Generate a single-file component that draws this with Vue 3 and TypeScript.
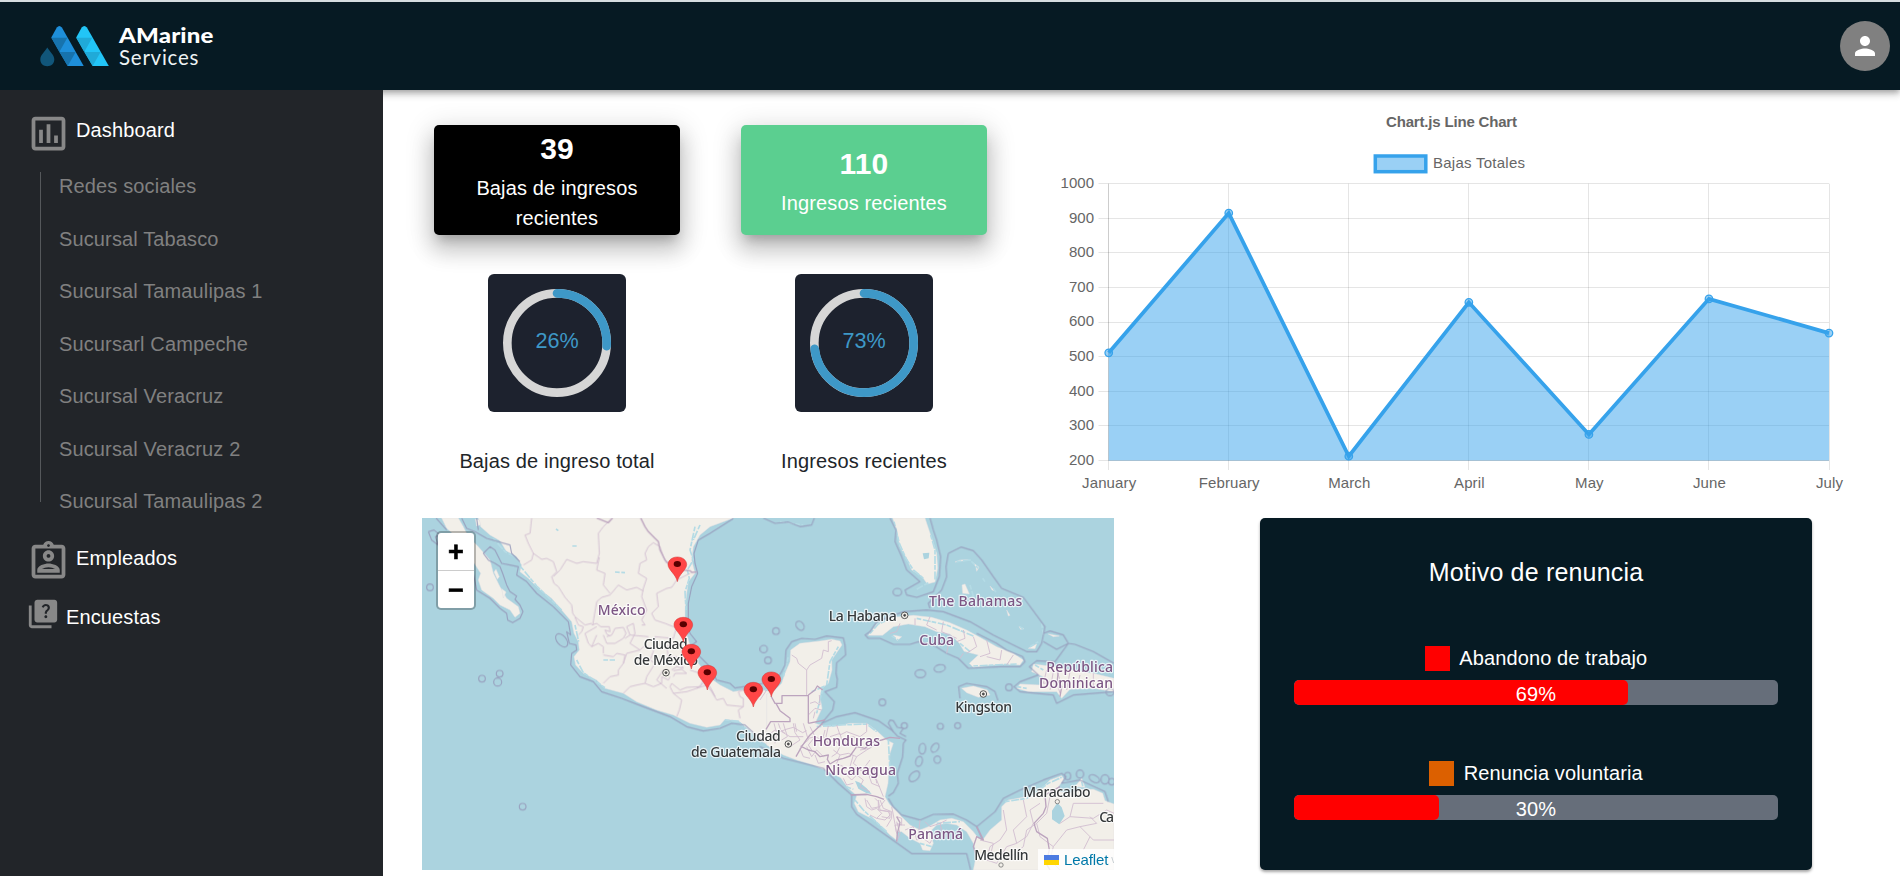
<script setup lang="ts">
interface Label { text: string; x: number; y: number; w: number; kind: 'country' | 'city' }

const branches: string[] = [
  'Redes sociales', 'Sucursal Tabasco', 'Sucursal Tamaulipas 1', 'Sucursarl Campeche',
  'Sucursal Veracruz', 'Sucursal Veracruz 2', 'Sucursal Tamaulipas 2',
]

const cards = [
  { value: 39, label: 'Bajas de ingresos recientes', tone: 'dark' },
  { value: 110, label: 'Ingresos recientes', tone: 'green' },
]

const gauges = [
  { value: 26, label: 'Bajas de ingreso total' },
  { value: 73, label: 'Ingresos recientes' },
]

const reasons = [
  { name: 'Abandono de trabajo', value: 69, tone: 'red' },
  { name: 'Renuncia voluntaria', value: 30, tone: 'orange' },
]

// Line chart geometry
const left = 68.7
const step = 120.05
const top = 93.7
const bottom = 370.4
const months = ['January', 'February', 'March', 'April', 'May', 'June', 'July']
const totals = [511, 915, 212, 657, 275, 667, 568]
const ticks = [1000, 900, 800, 700, 600, 500, 400, 300, 200]
const px = (i: number): number => left + i * step
const py = (v: number): number => bottom - ((v - 200) / 800) * (bottom - top)
const snap = (n: number): number => Math.floor(n) + 0.5
const line = totals.map((v, i) => `${px(i)},${py(v)}`).join(' ')
const area = `${px(0)},${bottom} ${line} ${px(6)},${bottom}`

// Gauge ring
const ring = 2 * Math.PI * 46
const dash = (v: number): string => `${(ring * v) / 100} ${ring}`

const pins: [number, number][] = [[802, 215], [820, 396], [844, 477], [892, 540], [1084, 560], [1030, 591]]

const labels: Label[] = [
  { text: 'México', x: 635, y: 315, w: 144, kind: 'country' },
  { text: 'Ciudad', x: 767, y: 416, w: 132, kind: 'city' },
  { text: 'de México', x: 768, y: 465, w: 193, kind: 'city' },
  { text: 'Ciudad', x: 1045, y: 692, w: 134, kind: 'city' },
  { text: 'de Guatemala', x: 978, y: 742, w: 270, kind: 'city' },
  { text: 'The Bahamas', x: 1697, y: 288, w: 280, kind: 'country' },
  { text: 'La Habana', x: 1358, y: 333, w: 204, kind: 'city' },
  { text: 'Cuba', x: 1580, y: 406, w: 104, kind: 'country' },
  { text: 'Kingston', x: 1721, y: 607, w: 170, kind: 'city' },
  { text: 'República', x: 2009, y: 485, w: 200, kind: 'country' },
  { text: 'Dominican', x: 1998, y: 535, w: 222, kind: 'country' },
  { text: 'Honduras', x: 1309, y: 708, w: 202, kind: 'country' },
  { text: 'Nicaragua', x: 1352, y: 794, w: 212, kind: 'country' },
  { text: 'Panamá', x: 1577, y: 988, w: 164, kind: 'country' },
  { text: 'Maracaibo', x: 1941, y: 861, w: 202, kind: 'city' },
  { text: 'Medellín', x: 1774, y: 1050, w: 163, kind: 'city' },
  { text: 'Ca', x: 2090, y: 936, w: 44, kind: 'city' },
]

const capitals: [number, number][] = [[768, 488], [1135, 702], [1484, 316], [1720, 552]]
const towns: [number, number][] = [[1942, 875], [1773, 1065]]

// Small islands: centre x, centre y, radius x, radius y, tilt
const islets: number[][] = [
  [60, 232, 10, 10, 0], [216, 506, 10, 10, 0], [269, 491, 10, 10, 0], [263, 516, 12, 12, 0],
  [338, 890, 10, 10, 0], [455, 391, 14, 23, -40], [1061, 417, 11, 11, 0], [1074, 451, 10, 10, 0],
  [1098, 363, 10, 10, 0], [1170, 347, 11, 15, -35], [1462, 246, 13, 11, 0], [1417, 577, 10, 10, 0],
  [1531, 491, 16, 12, 0], [1589, 475, 17, 11, -12], [1591, 649, 9, 9, 0], [1643, 647, 9, 9, 0],
  [1483, 647, 9, 9, 0], [1537, 716, 10, 16, 5], [1575, 713, 10, 15, 35], [1527, 754, 10, 15, 15],
  [1582, 749, 10, 11, 0], [1513, 799, 12, 19, 45], [1797, 532, 10, 10, 0], [1973, 798, 9, 11, 0],
  [2010, 792, 11, 12, 0], [2053, 806, 17, 10, 30], [2085, 808, 12, 14, 0], [2105, 815, 9, 10, 0], [2100, 546, 12, 11, 0],
]
</script>

<template>
  <div class="app">
    <header class="topbar">
      <svg class="logo" width="190" height="60" viewBox="0 0 190 60">
        <g>
          <path d="M17.3 32.5c-2.500 4.200-7 7.500-7 12 0 4.200 3.100 6.700 7 6.700s7-2.500 7-6.700c0-4.500-4.500-7.800-7-12z" fill="#11567a" />
          <path d="M21.300 22.500 26.800 12.600Q29.300 9.400 31.900 12.600L53.700 51H37.700z" fill="#1e8fda" />
          <path d="M21.300 22.800h16l-8 14.200zM29.300 37h16.400l-8 14z" fill="#1773ad" />
          <path d="M46.200 22.500 51.700 12.600Q54.300 9.400 56.900 12.600L78.800 51H62.700z" fill="#22c5f7" />
          <path d="M46.200 22.800h16l-8 14.200zM54.200 37h16.400l-8 14z" fill="#20aad8" />
        </g>
        <text x="89" y="27.600" class="brand" textLength="94.500" lengthAdjust="spacingAndGlyphs">AMarine</text>
        <text x="89" y="50.200" class="brand-sub" textLength="79.500">Services</text>
      </svg>
      <button class="avatar" aria-label="Perfil">
        <svg width="30" height="30" viewBox="0 0 24 24"><path fill="#fff" d="M12 12c2.210 0 4-1.790 4-4s-1.790-4-4-4-4 1.790-4 4 1.790 4 4 4zm0 2c-2.670 0-8 1.340-8 4v2h16v-2c0-2.660-5.330-4-8-4z" /></svg>
      </button>
    </header>

    <div class="body">
      <aside class="sidebar">
        <div class="nav-item first">
          <svg width="45" height="45" viewBox="0 0 24 24"><path d="M9 17H7v-7h2v7zm4 0h-2V7h2v10zm4 0h-2v-4h2v4zm2 2H5V5h14v14zm0-16H5c-1.100 0-2 .9-2 2v14c0 1.100.9 2 2 2h14c1.100 0 2-.9 2-2V5c0-1.100-.9-2-2-2z" fill-rule="evenodd" /></svg>
          <span>Dashboard</span>
        </div>
        <ul class="branches">
          <li v-for="b in branches" :key="b">{{ b }}</li>
        </ul>
        <div class="nav-item second">
          <svg width="45" height="45" viewBox="0 0 24 24"><path fill-rule="evenodd" d="M12 12c1.650 0 3-1.350 3-3s-1.350-3-3-3-3 1.350-3 3 1.350 3 3 3zm0-4c.55 0 1 .45 1 1s-.45 1-1 1-1-.45-1-1 .45-1 1-1zm6 8.580c0-2.500-3.970-3.580-6-3.580s-6 1.080-6 3.580V18h12v-1.420zM8.480 16c.74-.51 2.230-1 3.520-1s2.780.49 3.520 1H8.480zM19 3h-4.180C14.400 1.840 13.300 1 12 1c-1.300 0-2.400.84-2.820 2H5c-1.100 0-2 .9-2 2v14c0 1.100.9 2 2 2h14c1.100 0 2-.9 2-2V5c0-1.100-.9-2-2-2zm-7-.25c.41 0 .75.34.75.75s-.34.75-.75.75-.75-.34-.75-.75.34-.75.75-.75zM19 19H5V5h14v14z" /></svg>
          <span>Empleados</span>
        </div>
        <div class="nav-item third">
          <svg width="34" height="34" viewBox="0 0 24 24"><path fill-rule="evenodd" d="M4 6H2v14c0 1.100.9 2 2 2h14v-2H4V6zm16-4H8c-1.100 0-2 .9-2 2v12c0 1.100.9 2 2 2h12c1.100 0 2-.9 2-2V4c0-1.100-.9-2-2-2zm-5.990 13c-.59 0-1.050-.47-1.050-1.050 0-.59.47-1.040 1.050-1.040.59 0 1.040.45 1.040 1.040-.01.58-.45 1.050-1.040 1.050zm2.500-6.170c-.63.93-1.230 1.210-1.560 1.810-.13.24-.18.4-.18 1.180h-1.520c0-.41-.06-1.080.26-1.650.41-.73 1.180-1.160 1.630-1.800.48-.68.21-1.940-1.140-1.940-.88 0-1.320.67-1.500 1.230l-1.370-.57C11.510 5.960 12.520 5 13.990 5c1.230 0 2.080.56 2.510 1.260.37.61.58 1.730.01 2.570z" /></svg>
          <span>Encuestas</span>
        </div>
      </aside>

      <main class="main">
        <section class="upper">
          <div class="stats">
            <div v-for="c in cards" :key="c.value" class="card" :class="c.tone">
              <strong>{{ c.value }}</strong>
              <p>{{ c.label }}</p>
            </div>
            <figure v-for="g in gauges" :key="g.value" class="gauge">
              <div class="tile">
                <svg width="108" height="108" viewBox="0 0 100 100">
                  <circle cx="50" cy="50" r="46" class="trail" />
                  <circle cx="50" cy="50" r="46" class="arc" :stroke-dasharray="dash(g.value)" transform="rotate(-90 50 50)" />
                  <text x="50" y="54.800" class="percent">{{ g.value }}%</text>
                </svg>
              </div>
              <figcaption>{{ g.label }}</figcaption>
            </figure>
          </div>

          <svg class="chart" width="820" height="410" viewBox="0 0 820 410">
            <text x="411.500" y="36.500" class="chart-title" text-anchor="middle" textLength="131">Chart.js Line Chart</text>
            <rect x="335.300" y="66" width="50.500" height="15.700" class="legend-box" />
            <text x="393" y="78.300" textLength="92">Bajas Totales</text>
            <g class="grid">
              <line v-for="t in ticks" :key="t" x1="58.500" :x2="px(6)" :y1="snap(py(t))" :y2="snap(py(t))" />
              <line v-for="(m, i) in months" :key="m" :x1="snap(px(i))" :x2="snap(px(i))" :y1="top" y2="380" />
              <line :x1="snap(left)" :x2="snap(left)" :y1="top" :y2="bottom" />
              <line :x1="left" :x2="px(6)" :y1="snap(bottom)" :y2="snap(bottom)" />
            </g>
            <polygon :points="area" class="area" />
            <polyline :points="line" class="line" />
            <circle v-for="(v, i) in totals" :key="i" :cx="px(i)" :cy="py(v)" r="3.750" class="dot" />
            <text v-for="t in ticks" :key="t" x="54.300" :y="py(t) + 4.300" text-anchor="end" class="tick">{{ t }}</text>
            <text v-for="(m, i) in months" :key="m" :x="px(i) + 0.500" y="398" text-anchor="middle" class="tick">{{ m }}</text>
          </svg>
        </section>

        <section class="lower">
          <div class="map">
            <svg width="692" height="352" viewBox="36 24 2076 1056">
              <g class="land">
                <path d="M205 24 212 50 240 75 270 92 288 122 320 140 335 165 330 185 355 205 385 235 425 265 455 300 485 335 492 370 505 395 508 420 492 440 497 465 520 490 560 510 585 535 640 550 680 575 740 600 790 615 840 640 890 652 930 645 945 628 985 632 1010 655 1050 690 1090 715 1090 547 1060 540 1030 535 1000 540 970 545 930 525 895 500 865 460 845 420 832 380 825 340 825 300 830 250 835 215 855 190 845 150 850 110 870 75 900 50 970 24z" />
                <path d="M95 24H145L160 50 175 80 205 110 240 150 250 190 270 230 290 265 325 290 330 310 315 322 300 300 270 285 250 265 215 240 205 210 212 190 180 140 150 90 110 55z" />
                <path d="M196 28 208 30 212 44 200 48zM258 178 268 200 262 208 252 186zM275 236 288 246 280 264z" />
              </g>
              <g class="coast">
                <path d="M250 85 285 125 320 142M332 170 380 228 455 300M495 345 506 395M500 450 520 488 585 533M855 50 840 120 850 150 832 180 838 205 825 245 828 300M870 45 850 90M945 630 985 634 1040 685M1000 540 1075 540M615 186 645 188M487 108 500 108M438 57 445 62M580 450 615 450" />
              </g>
              <g transform="translate(1050 0)">
                <g class="land">
                  <path d="M20 552 45 540 65 520 75 490 90 455 92 420 120 400 180 393 215 388 240 393 246 405 232 425 215 450 216 480 205 520 185 535 180 560 186 595 165 640 190 648 220 650 270 640 320 640 350 662 380 690 400 700 390 730 386 780 384 820 375 860 388 882 412 905 425 920 450 945 480 960 510 948 540 930 575 925 610 935 640 965 655 985 668 990 690 960 725 930 725 890 745 870 800 860 850 830 870 810 905 797 912 808 895 830 900 845 930 850 960 838 1000 838 1028 850 1035 872 1062 882V1080H640L650 1030 640 1000 620 965 590 945 560 940 530 945 510 965 520 1000 510 1022 488 1020 480 1000 450 985 425 965 410 965 412 992 390 975 370 955 345 930 320 918 295 905 283 880 290 857 265 835 242 803 200 782 160 765 110 750 70 735 20 705z" />
                  <path d="M398 24H495L512 75 530 130 533 175 525 216 502 222 485 198 455 180 440 145 420 110 412 70z" />
                  <path d="M325 376 350 342 400 322 460 316 515 322 570 338 620 360 665 385 710 410 760 430 790 450 780 465 720 463 640 472 628 460 655 435 612 424 598 400 570 372 530 365 495 350 445 342 400 350 368 376z" />
                  <path d="M605 535 640 528 682 540 690 555 655 562 620 548zM400 375 425 380 412 392z" />
                  <path d="M820 462 870 468 930 480 1000 490 1062 505V545L1000 535 930 538 905 565 890 545 850 545 805 545 770 535 780 522 840 525 850 500 815 485z" />
                  <path d="M945 830 965 805 975 832zM606 225 615 222 628 252 608 250z" />
                  <path d="M585 156 600 150 625 149 606 153zM640 158 657 172 650 184 648 172zM690 228 704 242 696 240zM777 350 792 356 782 358zM805 415 830 402 825 416zM865 372 898 378 880 380zM740 300 750 316 745 318z" />
                </g>
                <path class="lake" d="M892 878 905 892 914 918 898 943 876 928 876 902zM488 130 508 128 506 145 492 148zM285 812 300 818 320 835 335 852 320 850 295 836z" />
                <g class="coast">
                  <path d="M402 35 418 100 438 145 460 180 490 205M505 218 470 238M512 75 525 120 525 210M330 370 355 342 395 325M395 378 415 390M470 325 560 345 640 378M600 400 630 425M640 468 770 462M70 500 85 440M200 525 210 455 235 410M155 545 190 530 170 610M170 650 240 645 320 642 350 665M385 690 390 780M260 830 280 838M285 870 310 900 380 965M480 1000 515 1010M530 940 600 935M735 875 800 865 865 820 905 802M590 155 630 150 655 175M668 205 675 215M630 225 645 275M700 235 710 250M780 350 790 358M810 410 835 395M825 465 850 480M770 530 800 535M60 35 130 45M845 340 850 375M965 815 970 835" />
                </g>
              </g>
              <g class="limits">
                <path d="M55 65 72 60 90 75 76 80 85 105 65 90 55 65M190 190 200 240 240 265 270 295 290 310 293 330 308 338 330 325 339 305 330 285 315 268 320 258 300 245 290 225 278 190 270 170 255 160 235 150 220 130 240 110 255 120 275 160 300 165 325 170 320 195 350 215 380 250 430 290 475 335 482 375 470 365 478 400 498 405 500 420 485 430 482 465 510 500 550 515 575 545 635 565 700 590 780 620 830 650 880 663 930 655 965 640 1005 645 1060 695M970 26 900 70 865 90 852 130 855 160 863 190 845 230 835 280 835 340 840 370 860 395 845 405 870 440 900 470 920 510 960 520 975 534 1000 530 1060 520M200 24 205 60M155 24 170 55 195 65 230 85 300 105 305 130 330 155" />
                <path d="M78 24 110 60" />
                <g transform="translate(1050 0)">
                  <path d="M45 515 65 485 75 465 78 420 95 395 125 385 165 388 200 378 250 384 255 405 257 435 240 450 230 458 228 490 232 508 230 532 195 545 223 575 218 600 185 640 230 620 285 608 355 632 395 660 412 678 438 690 430 700 428 740 412 790 415 820 400 848 385 858M0 710 70 745 130 760 190 775 235 820 275 855 275 890 290 913 455 1031H620L632 1080M385 865 400 890 425 915 480 930 520 913 580 912 620 930 650 950 705 905 730 865 780 840 850 810 905 790 918 800 905 820 960 810 1035 845 1045 875M275 855 320 853M650 950 668 990" />
                  <path d="M390 24 408 60 405 95 425 140 440 180 480 215 435 240 440 255 470 262 520 245 538 200 542 140 530 90 520 60 510 24M565 130 603 111 640 122 665 150 700 200 725 235 790 262 855 350 845 400 830 425 800 425 700 375 630 335 550 305 500 300 430 305 350 335 330 365 315 375 325 385 360 385 400 403 450 403 475 395 520 405 560 430 595 445 625 475 720 470 780 470 795 455 788 440 740 420 710 400 650 370M510 295 505 280 545 240 560 200 558 170 565 130" />
                  <path d="M850 370 870 363 910 375 925 400 890 418 850 395M925 400 885 455 830 452 808 470 835 495 780 515 762 530 780 545 880 555 890 580 940 555 1062 545M925 400 945 403 1000 425 1062 460M600 565 596 530 620 520 680 530 705 545 714 572M10 24 45 40 85 36 120 50 155 45 163 24M400 665 385 640 390 630 400 632 412 652 430 655 420 670 438 680" />
                </g>
                <ellipse v-for="(e, i) in islets" :key="i" :cx="e[0]" :cy="e[1]" :rx="e[2]" :ry="e[3]" :transform="`rotate(${e[4]} ${e[0]} ${e[1]})`" />
              </g>
              <g class="states">
                <path d="M365 24 360 70 345 75 355 100 370 130 365 150 340 165M370 130 395 148 410 145 430 155 440 185 425 200 432 220 445 230 465 262 485 285 488 310 495 320 525 345 545 340M430 200 450 180 470 148 500 160 520 155 560 160 568 130 565 70 580 50 590 40 605 24M568 142 560 180 585 190 580 225 600 250M548 345 560 275 575 262 600 255M600 255 625 225 650 240 680 232 700 243M700 235 695 260 710 300 695 330 705 345 695 345M700 235 710 205 685 190 690 160 710 150 705 130 715 110 730 98 750 110 760 140 770 160M840 190 800 210 785 232 770 235 740 250 745 290 725 310 735 330 765 340 790 350 825 350M545 345 560 340 572 350 598 350 600 365 585 360 590 372 600 378M495 322 505 345 520 350 515 365 505 375M560 375 545 410 565 400 580 410 580 430M545 410 535 400 525 370 560 350M590 380 605 375 615 355 640 352 648 370 640 385 615 400 590 400 580 375M580 435 610 440 620 430 645 435 640 460 625 480 625 495 600 500 580 520M645 385 660 375 650 350 670 340M660 375 715 380M670 340 675 370 660 400 690 420 700 410 735 415 735 380 790 385 800 350M640 460 650 430 690 420M660 530 640 550M660 530 680 525 705 520 730 530 755 520 755 500 775 510 780 500M785 480 800 470 820 475 800 440 775 440 770 410 800 400M735 410 720 450 735 460 710 500 705 520M790 500 795 490 830 490 815 478 790 482M780 530 790 550 830 545 860 535 880 520 900 530 915 560 905 540M780 530 785 520 810 540 830 532 870 530 880 510 870 490 840 480M790 550 815 570 808 600 800 620M860 535 890 525 905 545 920 570 940 565 950 585 1000 590 1000 565 990 560 985 545 1000 540M1000 590 985 600 990 625M760 480 740 510 770 535" />
                <g transform="translate(1050 0)">
                  <path d="M95 435 110 445 115 460 140 480 150 465 185 445 190 420 205 425 205 395 215 392M140 480V555M20 540 0 570M55 640 62 660 75 670M100 640 105 668 120 690 90 710M65 665 90 680 130 680M130 640 145 690 120 710M42 640 50 670 45 700M150 650 165 680 145 705 155 720M195 660 190 680 205 700 225 690 240 710 230 730 215 740M230 645 240 675 260 665 300 680 320 665V640M210 680 240 670 245 690 280 680 300 690M280 735 270 770 310 780 350 810 370 860M300 720 330 715 350 695M330 750 315 770 345 780 350 820M315 865 320 890 335 900 350 895 365 910 350 925 330 915M345 865 355 875 355 900 385 905 390 915 375 930 350 925M360 870 370 895 395 905 395 925 380 950M395 890 400 915 410 970 405 945 435 945" />
                  <path d="M465 325V345M510 320 500 345 530 360M550 335 545 365 590 385M610 360 615 385 590 395M640 380 650 410 620 430M680 390 690 430 660 440M725 420 720 450 680 440M760 435 740 465M570 380 560 430M610 430 600 445M420 340 410 365 390 370" />
                  <path d="M730 900 740 960 720 990 690 1010 680 1050 710 1060 740 1010 770 1000 760 960 800 920 790 870M770 1000 800 980 820 940 810 900 840 880M870 860 860 910 830 940 840 980 880 1010 870 1050 900 1080M830 940 800 960 790 1010 740 1050M880 1010 920 960 960 950 1000 990 1062 990M900 940 930 920 940 880 1030 880M930 920 1000 925 1040 900 1062 910M960 950 1010 940 990 920M990 980 970 1020M660 990 700 1000 690 1040M860 480 850 520 890 515 900 550M880 485 870 540M930 485 920 540M960 495 950 535M1000 490 1000 530M835 500 870 515M890 480 900 510" />
                </g>
                <g transform="translate(870 390)">
                  <path d="M205 285 225 270 240 275 258 268M250 250 262 290 245 300M258 268 280 262 308 278 320 272M285 250 290 275M330 190 345 185 360 195 358 165M325 225 345 205 365 210M340 235 345 215M325 295 345 290 365 300M320 320 335 350 350 330 370 350M300 325 310 350 330 355M345 345 355 370 375 365M385 258 378 290 395 305M400 330 420 345 410 370 430 380M420 345 445 340 470 350 460 370 480 385M435 400 455 420 470 405 490 420 480 440 510 455M480 390 505 400 515 430 540 440M470 350 500 330 525 315M430 415 440 435 460 430M500 480 515 505 540 500 555 480M535 480 540 510 570 515 570 535 545 530M590 530 605 535 605 555 590 550M590 545 600 580 590 605M615 570 640 560 650 600 670 595 690 610M660 540 655 585M675 545 690 560 720 550 740 540M720 550 730 590 750 585M690 610 710 570" />
                </g>
              </g>
              <g class="borders">
                <path d="M560 24 595 38 608 24M692 24 705 50 715 65 735 85 745 95 750 120 765 150 780 165 815 180 840 182 845 187 860 186" />
                <g transform="translate(870 390)">
                  <path d="M213 168 225 190H246V167H325V250M246 190H228L240 212 270 235V245H212L198 268M325 165 345 150 352 138 368 150M325 250 375 240M368 250 330 285 322 295 305 320 288 350M305 320 325 330 345 335 360 350 385 345 382 358 390 372M390 372 410 360 430 355 450 348 470 320 495 325 520 305 545 300 570 292 600 295M452 465 500 463 530 470 552 478M590 530 600 548 592 580 590 605" />
                </g>
                <path d="M1700 950 1720 990 1700 980 1690 1010 1700 1040M1950 830 1905 855 1908 890 1900 910 1872 940 1880 965 1912 985 1918 1020 1908 1060 1920 1080M1945 480 1942 510 1955 530 1950 560" />
              </g>
              <g class="city-marks">
                <template v-for="c in capitals" :key="c[0]">
                  <circle :cx="c[0]" :cy="c[1]" r="10" />
                  <circle :cx="c[0]" :cy="c[1]" r="3" class="core" />
                </template>
                <circle v-for="c in towns" :key="c[0]" :cx="c[0]" :cy="c[1]" r="6.500" class="town" />
              </g>
              <text v-for="(l, i) in labels" :key="i" :x="l.x - l.w / 2" :y="l.y" :class="l.kind" :textLength="l.w">{{ l.text }}</text>
              <g v-for="(p, i) in pins" :key="i" :transform="`translate(${p[0]} ${p[1]})`">
                <path class="pin" d="M0 0C-4-22-28-36-28-51-28-65-15-74 0-74S28-65 28-51C28-36 4-22 0 0z" />
                <ellipse cy="-53" rx="11" ry="9" class="pin-eye" />
              </g>
            </svg>
            <div class="zoom">
              <button>+</button>
              <button>−</button>
            </div>
            <div class="attribution">
              <svg width="15" height="10" viewBox="0 0 15 10"><path fill="#4c7be1" d="M0 0h15v5H0z" /><path fill="#ffd500" d="M0 5h15v5H0z" /></svg>
              <a>Leaflet</a><span>v</span>
            </div>
          </div>

          <div class="reasons">
            <h2>Motivo de renuncia</h2>
            <div v-for="r in reasons" :key="r.name" class="reason">
              <div class="reason-name"><i :class="r.tone"></i><span>{{ r.name }}</span></div>
              <div class="track">
                <div class="fill" :style="{ width: r.value + '%' }"></div>
                <span>{{ r.value }}%</span>
              </div>
            </div>
          </div>
        </section>
      </main>
    </div>
  </div>
</template>

<style>
body { margin: 0; overflow: hidden; background: #fff; }
</style>

<style scoped>
* { box-sizing: border-box; }
.app { width: 1900px; height: 876px; overflow: hidden; font-family: "Liberation Sans", Arial, sans-serif; font-size: 20px; line-height: 30px; letter-spacing: .13px; color: #212529; background: #fff; }
.topbar { position: relative; z-index: 1; height: 90px; border-top: 2px solid #d5dde0; background: #061a23; display: flex; align-items: center; justify-content: space-between; padding: 0 10px 0 30px; box-shadow: 0 2.500px 5px -1px rgba(0,0,0,.2), 0 5px 6px rgba(0,0,0,.14), 0 1px 12px rgba(0,0,0,.12); }
.logo { margin-top: -3px; }
.brand { font: 900 21.500px Lato, sans-serif; fill: #fff; }
.brand-sub { font: 400 20.500px Lato, sans-serif; fill: #eef3f4; }
.avatar { width: 50px; height: 50px; padding: 0; border: 0; border-radius: 50%; background: #808080; display: grid; place-items: center; }
.body { display: flex; height: 786px; }
.sidebar { position: relative; z-index: 2; width: 383px; flex: none; background: #222529; padding: 20px 0 0 25.500px; }
.nav-item { display: flex; color: #fff; }
.nav-item svg { fill: #888; flex: none; }
.nav-item.first svg, .nav-item.second svg { margin-top: .5px; }
.nav-item.first span, .nav-item.second span { margin: 5px 0 0 5.500px; }
.nav-item.first { height: 62px; }
.branches { list-style: none; margin: 0 0 0 14.500px; padding: 0 0 0 18px; border-left: 1px solid #55585b; height: 330px; color: #808080; }
.branches li { height: 52.500px; line-height: 28px; }
.nav-item.second { margin-top: 35.500px; height: 60px; }
.nav-item.second svg { margin-top: 1px; }
.nav-item.third svg { margin-top: .5px; }
.nav-item.third span { margin: 5px 0 0 6px; }
.nav-item.third { margin-left: .5px; margin-top: -1px; }
.main { flex: 1; }
.upper { display: flex; height: 428px; padding-left: 20.500px; }
.stats { width: 614px; padding-top: 35px; display: grid; grid-template-columns: 307px 307px; grid-template-rows: 149px 1fr; justify-items: center; }
.card { width: 246px; height: 110px; border-radius: 5px; padding: 0 30px; color: #fff; text-align: center; display: flex; flex-direction: column; justify-content: center; box-shadow: 0 9px 10px -5px rgba(0,0,0,.2), 0 15px 21px 2.500px rgba(0,0,0,.14), 0 6px 27px 5px rgba(0,0,0,.12); }
.card.dark { background: #000; }
.card.green { background: #5bcf90; }
.card strong { height: 45px; font-size: 30px; line-height: 42px; }
.card p { margin: 0; }
.gauge { margin: 0; display: flex; flex-direction: column; align-items: center; }
.tile { position: relative; width: 138px; height: 138px; padding: 15px; border-radius: 6px; background: #1d222e; }
.tile svg, .chart, .map > svg { display: block; }
.trail, .arc { fill: none; stroke-width: 8; }
.trail { stroke: #d6d6d6; }
.arc { stroke: #3e98c7; stroke-linecap: round; }
.percent { fill: #3e98c7; font-size: 20px; text-anchor: middle; letter-spacing: 0; }
.gauge figcaption { margin-top: 34px; }
.chart { margin-left: 22.500px; flex: none; font-size: 15px; fill: #666; letter-spacing: 0; }
.chart-title { font-weight: bold; }
.tick { letter-spacing: .12px; }
.grid line { stroke: rgba(0,0,0,.1); stroke-width: 1; }
.legend-box { fill: #9ad0f5; stroke: #36a2eb; stroke-width: 3.500; }
.area { fill: rgba(54,162,235,.5); }
.line { fill: none; stroke: #36a2eb; stroke-width: 3.750; }
.dot { fill: rgba(54,162,235,.5); stroke: #36a2eb; stroke-width: 1.250; }
.lower { display: flex; padding-left: 39px; }
.map { position: relative; width: 692px; height: 352px; background: #abd3df; overflow: hidden; letter-spacing: 0; }
.land { fill: #f2efe9; stroke: #e1dfe2; stroke-width: 1.500; stroke-linejoin: round; }
.lake { fill: #abd3df; }
.coast { fill: none; stroke: #b4dbe5; stroke-width: 5; stroke-dasharray: 14 5 24 3; }
.limits { fill: none; stroke: #9598b9; stroke-width: 3.500; stroke-linejoin: round; opacity: .82; }
.states { fill: none; stroke: #d1bdd0; stroke-width: 2.700; stroke-linejoin: round; }
.borders { fill: none; stroke: #bca4be; stroke-width: 4; stroke-linejoin: round; }
.city-marks { fill: #f2efe9; stroke: #555; stroke-width: 3; }
.city-marks .core { fill: #333; }
.city-marks .town { stroke: #777; stroke-width: 2.500; }
.country, .city { font-family: "Noto Sans", sans-serif; font-size: 42px; font-weight: 500; paint-order: stroke; stroke: rgba(255,255,255,.72); stroke-width: 7px; stroke-linejoin: round; }
.country { fill: #7c5684; }
.city { fill: #35383a; }
.pin { fill: #ff4646; stroke: #d33535; stroke-width: 1.500; }
.pin-eye { fill: #590000; }
.zoom { position: absolute; left: 14px; top: 13px; width: 40px; border: 2px solid rgba(0,0,0,.25); border-radius: 5px; background: #fff; background-clip: padding-box; display: flex; flex-direction: column; }
.zoom button { height: 37px; border: 0; background: none; padding: 0; color: #000; font: bold 27px/34px "Liberation Sans", sans-serif; -webkit-text-stroke: .6px #000; }
.zoom button:first-child { height: 38px; border-bottom: 1px solid #ccc; }
.attribution { position: absolute; right: 0; bottom: 0; width: 76px; height: 21px; padding-left: 6px; display: flex; align-items: center; overflow: hidden; background: rgba(255,255,255,.8); font-size: 15px; line-height: 21px; }
.attribution svg { flex: none; }
.attribution a { color: #0078a8; margin: 0 3px 0 5px; letter-spacing: -.1px; }
.attribution span { color: #c4ccd0; font-size: 10px; }
.reasons { margin-left: 146px; width: 552px; height: 352px; padding: 0 34px; border-radius: 5px; background: #061a23; color: #fff; text-align: center; box-shadow: 0 2px 3px rgba(0,0,0,.35); }
.reasons h2 { margin: 36px 0 56px; font-size: 25px; font-weight: 400; line-height: 36px; letter-spacing: .18px; }
.reason { height: 115px; }
.reason-name { height: 34px; display: flex; justify-content: center; gap: 9.500px; }
.reason-name i { width: 25px; height: 25px; }
.reason-name span { line-height: 25px; }
.red { background: #f00; }
.orange { background: #dc6000; }
.track { position: relative; height: 25px; border-radius: 5px; background: #666e7a; overflow: hidden; }
.fill { height: 25px; border-radius: 5px; background: #f00; }
.track span { position: absolute; inset: 0; line-height: 29px; }
</style>
